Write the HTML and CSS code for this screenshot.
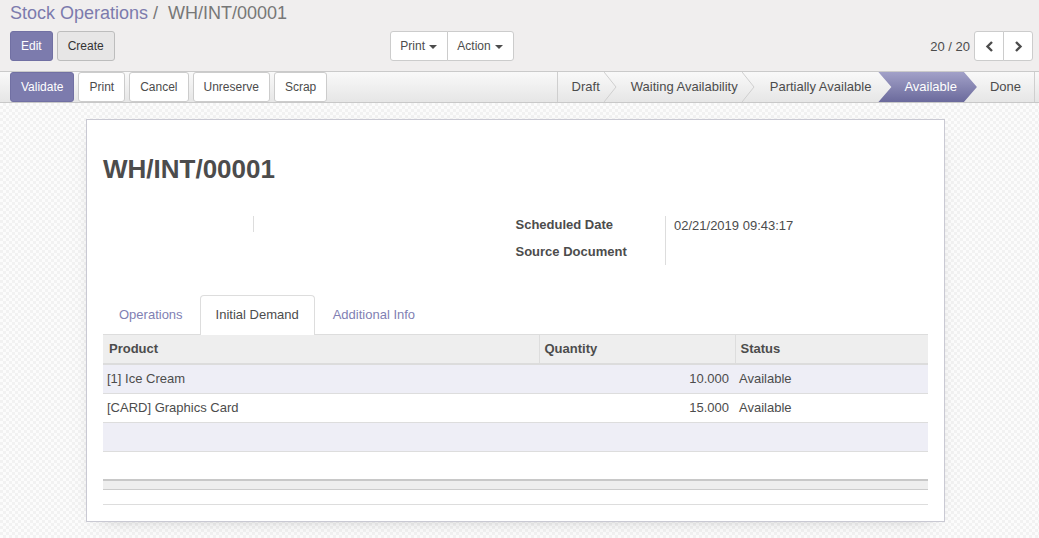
FILE: index.html
```html
<!DOCTYPE html>
<html>
<head>
<meta charset="utf-8">
<link rel="stylesheet" href="styles.css">
</head>
<body>
<div class="control-panel">
  <ol class="breadcrumb">
    <li class="crumb-link">Stock Operations</li>
    <li class="crumb-sep">/</li>
    <li class="crumb-active">WH/INT/00001</li>
  </ol>
  <div class="cp-row">
    <div class="cp-left">
      <div class="btn-row">
        <button class="btn btn-primary">Edit</button>
        <button class="btn btn-secondary">Create</button>
      </div>
      <div class="btn-group">
        <button class="btn btn-default">Print <span class="caret"></span></button>
        <button class="btn btn-default">Action <span class="caret"></span></button>
      </div>
    </div>
    <div class="cp-right">
      <span class="pager-value">20 / 20</span>
      <div class="btn-group">
        <button class="btn btn-default pager-btn"><svg width="9" height="11" viewBox="0 0 9 11"><path d="M7 1 L2.5 5.5 L7 10" fill="none" stroke="#4c4c4c" stroke-width="2.4"/></svg></button>
        <button class="btn btn-default pager-btn"><svg width="9" height="11" viewBox="0 0 9 11"><path d="M2 1 L6.5 5.5 L2 10" fill="none" stroke="#4c4c4c" stroke-width="2.4"/></svg></button>
      </div>
    </div>
  </div>
</div>

<div class="statusbar">
  <div class="sb-buttons">
    <button class="btn btn-primary">Validate</button>
    <button class="btn btn-default">Print</button>
    <button class="btn btn-default">Cancel</button>
    <button class="btn btn-default">Unreserve</button>
    <button class="btn btn-default">Scrap</button>
  </div>
  <div class="steps">
    <div class="step chev">Draft<svg class="chevron" width="13" height="30" viewBox="0 0 13 30"><polyline points="0,0 12,15 0,30" fill="none" stroke="#cfcfcf" stroke-width="1"/></svg></div>
    <div class="step chev">Waiting Availability<svg class="chevron" width="13" height="30" viewBox="0 0 13 30"><polyline points="0,0 12,15 0,30" fill="none" stroke="#cfcfcf" stroke-width="1"/></svg></div>
    <div class="step step-before">Partially Available</div>
    <div class="step step-active">Available</div>
    <div class="step step-last">Done</div>
  </div>
</div>

<div class="form-view">
  <div class="sheet">
    <h1 class="title">WH/INT/00001</h1>
    <div class="groups">
      <table class="group">
        <tr class="row-empty"><td class="lbl"></td><td class="val"></td></tr>
      </table>
      <table class="group">
        <tr class="row-1"><td class="lbl">Scheduled Date</td><td class="val">02/21/2019 09:43:17</td></tr>
        <tr class="row-2"><td class="lbl">Source Document</td><td class="val"></td></tr>
      </table>
    </div>
    <ul class="tabs">
      <li class="tab">Operations</li>
      <li class="tab tab-active">Initial Demand</li>
      <li class="tab">Additional Info</li>
    </ul>
    <table class="list">
      <thead>
        <tr><th class="c-product">Product</th><th class="c-qty">Quantity</th><th class="c-status">Status</th></tr>
      </thead>
      <tbody>
        <tr class="odd"><td>[1] Ice Cream</td><td class="num">10.000</td><td>Available</td></tr>
        <tr><td>[CARD] Graphics Card</td><td class="num">15.000</td><td>Available</td></tr>
        <tr class="odd"><td></td><td></td><td></td></tr>
        <tr class="last"><td></td><td></td><td></td></tr>
      </tbody>
      <tfoot>
        <tr><td></td><td></td><td></td></tr>
      </tfoot>
    </table>
    <div class="list-bottom"></div>
  </div>
</div>
</body>
</html>
```

FILE: styles.css
```css
* { box-sizing: border-box; }
html, body { height: 100%; }
body {
  margin: 0;
  font-family: "Liberation Sans", Arial, sans-serif;
  font-size: 13px;
  color: #4c4c4c;
  background: #fff;
  overflow: hidden;
}

/* Control panel */
.control-panel {
  background: #f0eeee;
  border-bottom: 1px solid #cacaca;
  padding: 0 6px 10px 10px;
}
.breadcrumb {
  display: flex;
  list-style: none;
  margin: 0;
  padding: 0;
  font-size: 18px;
  line-height: 26px;
  height: 26px;
}
.crumb-link { color: #7c7bad; }
.crumb-sep { color: #777; padding: 0 5px; }
.crumb-active { color: #777; padding-left: 5px; }

.cp-row {
  display: grid;
  grid-template-columns: 1fr 1fr;
  margin-top: 5px;
}
.cp-left {
  display: flex;
  justify-content: space-between;
  padding-right: 8px;
}
.btn-row { display: flex; gap: 4px; }
.cp-right {
  display: flex;
  justify-content: flex-end;
  align-items: center;
  gap: 4px;
}
.pager-value { font-size: 13px; color: #4c4c4c; }

.btn {
  font-family: inherit;
  font-size: 12px;
  line-height: 18px;
  height: 30px;
  padding: 5px 10px;
  border: 1px solid transparent;
  border-radius: 3px;
  color: #4c4c4c;
  background: #fff;
  white-space: nowrap;
}
.btn-primary {
  background: #7c7bad;
  border-color: #7170a3;
  color: #fff;
}
.btn-secondary {
  background: #e7e6e6;
  border-color: #bdbdbd;
  color: #333;
}
.btn-default {
  background: #fff;
  border-color: #ccc;
  color: #4c4c4c;
}
.btn-group { display: flex; }
.btn-group .btn { border-radius: 0; }
.btn-group .btn:first-child { border-radius: 3px 0 0 3px; }
.btn-group .btn:last-child { border-radius: 0 3px 3px 0; margin-left: -1px; }
.cp-left .btn-group .btn { padding: 5px 9.5px; }
.caret {
  display: inline-block;
  width: 0;
  height: 0;
  border-top: 4px solid #4c4c4c;
  border-left: 4px solid transparent;
  border-right: 4px solid transparent;
  vertical-align: middle;
  margin-left: 1px;
}
.pager-btn {
  width: 30px;
  padding: 0;
  display: flex;
  align-items: center;
  justify-content: center;
}

/* Status bar */
.statusbar {
  display: flex;
  height: 31px;
  border-bottom: 1px solid #c8c8c8;
  background: linear-gradient(#f9f9f9, #e6e6e6);
  padding: 0 4px 0 10px;
}
.sb-buttons { display: flex; gap: 4px; }
.sb-buttons .btn { height: 30px; padding: 5px 10px; }
.steps {
  display: flex;
  margin-left: auto;
  height: 30px;
  border-left: 1px solid #cfcfcf;
  border-right: 1px solid #cfcfcf;
}
.step {
  position: relative;
  line-height: 30px;
  font-size: 13px;
  color: #4c4c4c;
  white-space: nowrap;
}
.step.chev { padding: 0 17px 0 14px; }
.chevron { position: absolute; right: 0; top: 0; }
.step-before { padding: 0 7px 0 15px; }
.step-active {
  padding: 0 20px 0 26px;
  color: #fff;
  background: linear-gradient(#a2a1c8, #6b6a9c);
  clip-path: polygon(0 0, calc(100% - 13px) 0, 100% 50%, calc(100% - 13px) 100%, 0 100%, 13px 50%);
}
.step-last { padding: 0 13px; }

/* Form */
.form-view {
  height: calc(100% - 103px);
  background: repeating-conic-gradient(#f2f2f2 0 25%, #fcfcfc 0 50%) 0 0 / 6px 6px;
  padding: 16px 94px 16px 86px;
}
.sheet {
  background: #fff;
  border: 1px solid #c9c9d3;
  box-shadow: 0 5px 20px -15px rgba(0, 0, 0, 0.5);
  padding: 16px 16px 16px;
}
.title {
  margin: 17px 0 0;
  font-size: 26px;
  line-height: 32px;
  font-weight: bold;
  color: #4c4c4c;
}
.groups {
  display: grid;
  grid-template-columns: 1fr 1fr;
  margin-top: 31px;
  height: 49px;
}
.group { border-collapse: collapse; align-self: start; }
.group td { padding: 0; vertical-align: top; line-height: 16px; }
.group .lbl {
  width: 150px;
  border-right: 1px solid #ddd;
  font-weight: bold;
}
.group .val { padding-left: 8px; }
.row-empty td { height: 16px; }
.row-1 td { height: 27px; }
.row-1 .lbl { padding-top: 1px; }
.row-1 .val { padding-top: 2px; }
.row-2 td { height: 22px; }
.row-2 .lbl { padding-top: 1px; }

.tabs {
  display: flex;
  list-style: none;
  margin: 30px 0 0;
  padding: 0;
  border-bottom: 1px solid #ddd;
}
.tab {
  padding: 10px 15px;
  line-height: 18px;
  border: 1px solid transparent;
  border-bottom: 0;
  border-radius: 4px 4px 0 0;
  margin-right: 2px;
  color: #8180b3;
}
.tab:first-child { margin-right: 1px; }
.tab-active {
  color: #4c4c4c;
  background: #fff;
  border-color: #ddd;
  margin-bottom: -1px;
  padding-bottom: 11px;
}

.list {
  width: 100%;
  border-collapse: collapse;
  table-layout: fixed;
}
.list th {
  background: #eee;
  height: 29px;
  padding: 0 5px 1px;
  text-align: left;
  font-weight: bold;
  border-left: 1px solid #ddd;
  border-bottom: 2px solid #dcdcdc;
}
.list th:first-child { border-left: 0; padding-left: 6px; }
.c-product { width: 436px; }
.c-qty { width: 196px; }
.list td {
  height: 29px;
  padding: 0 5px 0 4px;
  border-bottom: 1px solid #ddd;
}
.list td.num { text-align: right; padding-right: 6px; }
.list tbody tr.odd td { background: #eeeef6; }
.list tbody tr.last td { height: 29px; border-bottom: 0; }
.list tfoot td {
  height: 9px;
  padding: 0;
  background: #eee;
  border-top: 2px solid #c8c8c8;
  border-bottom: 1px solid #cccccc;
}
.list-bottom {
  height: 15px;
  border-bottom: 1px solid #ddd;
}
```
